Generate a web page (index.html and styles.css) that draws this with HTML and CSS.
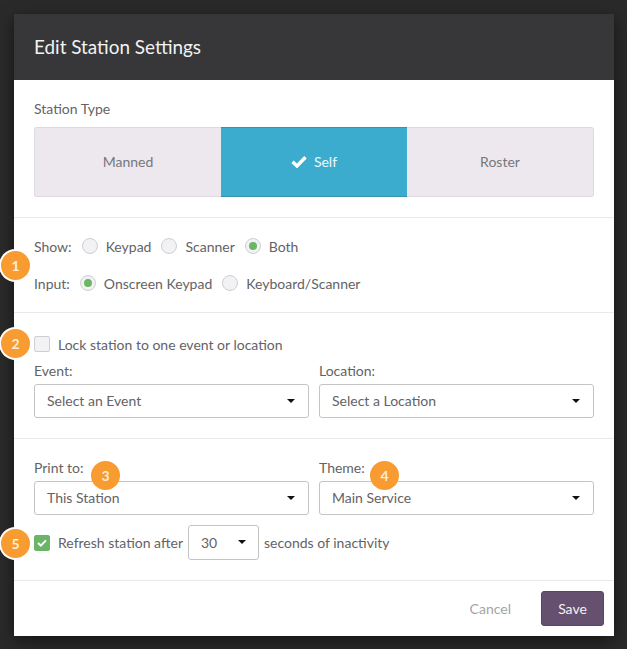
FILE: index.html
```html
<!DOCTYPE html>
<html lang="en">
<head>
<meta charset="utf-8">
<title>Edit Station Settings</title>
<link rel="stylesheet" href="styles.css">
</head>
<body>
<div class="modal">
  <header class="modal-header">Edit Station Settings</header>

  <section class="section type-section">
    <div class="label type-label">Station Type</div>
    <div class="segments">
      <div class="segment">Manned</div>
      <div class="segment active">
        <svg class="seg-check" width="16" height="13" viewBox="0 0 16 13"><path d="M1.5 6.8 L6 11 L14.5 2.2" fill="none" stroke="#fff" stroke-width="3.4"/></svg>
        Self
      </div>
      <div class="segment">Roster</div>
    </div>
  </section>

  <section class="section radio-section">
    <div class="radio-row show-row">
      <span class="row-label">Show:</span>
      <span class="radio"></span><span class="radio-text">Keypad</span>
      <span class="radio"></span><span class="radio-text">Scanner</span>
      <span class="radio on"></span><span class="radio-text">Both</span>
    </div>
    <div class="radio-row">
      <span class="row-label">Input:</span>
      <span class="radio on"></span><span class="radio-text">Onscreen Keypad</span>
      <span class="radio"></span><span class="radio-text">Keyboard/Scanner</span>
    </div>
  </section>

  <section class="section lock-section">
    <div class="check-row">
      <span class="checkbox"></span>
      <span>Lock station to one event or location</span>
    </div>
    <div class="field-grid">
      <div>
        <div class="label field-label">Event:</div>
        <div class="select"><span>Select an Event</span><i class="caret"></i></div>
      </div>
      <div>
        <div class="label field-label">Location:</div>
        <div class="select"><span>Select a Location</span><i class="caret"></i></div>
      </div>
    </div>
  </section>

  <section class="section print-section">
    <div class="field-grid">
      <div>
        <div class="label field-label">Print to:</div>
        <div class="select"><span>This Station</span><i class="caret"></i></div>
      </div>
      <div>
        <div class="label field-label">Theme:</div>
        <div class="select"><span>Main Service</span><i class="caret"></i></div>
      </div>
    </div>
    <div class="refresh-row">
      <span class="checkbox checked">
        <svg width="10" height="8" viewBox="0 0 10 8"><path d="M1 4 L3.8 6.6 L9 1.4" fill="none" stroke="#fff" stroke-width="2"/></svg>
      </span>
      <span class="refresh-text">Refresh station after</span>
      <div class="select small"><span>30</span><i class="caret"></i></div>
      <span class="after-text">seconds of inactivity</span>
    </div>
  </section>

  <footer class="modal-footer">
    <span class="cancel">Cancel</span>
    <span class="save">Save</span>
  </footer>

  <span class="badge ring b1">1</span>
  <span class="badge ring b2">2</span>
  <span class="badge b3">3</span>
  <span class="badge b4">4</span>
  <span class="badge ring b5">5</span>
</div>
</body>
</html>
```
FILE: styles.css
```css
* { box-sizing: border-box; }
html, body { margin: 0; height: 649px; overflow: hidden; }
body {
  background: #2a2a2a;
  padding: 14px 13px 13px 14px;
  font-family: Lato, "Liberation Sans", sans-serif;
  font-size: 14px;
  color: #636366;
}
.modal {
  position: relative;
  width: 600px;
  height: 622px;
  background: #fff;
  display: flex;
  flex-direction: column;
  box-shadow: 0 5px 15px rgba(0, 0, 0, .5);
}
.modal-header {
  height: 66px;
  background: #373739;
  color: #f2f2f2;
  font-size: 18.9px;
  line-height: 66px;
  padding-left: 20px;
}
.section { padding: 0 20px; border-bottom: 1px solid #eaeaea; }
.type-section { height: 138px; padding-top: 19px; }
.label { line-height: 20px; }
.type-label { height: 28px; }
.segments {
  display: grid;
  grid-template-columns: 187px 186px 187px;
  height: 70px;
}
.segment {
  display: flex;
  align-items: center;
  justify-content: center;
  gap: 7px;
  background: #ece8ee;
  border: 1px solid #dedbe0;
  color: #77777a;
  padding-bottom: 2px;
}
.segment:first-child { border-right: 0; border-radius: 3px 0 0 3px; }
.segment:last-child { border-left: 0; border-radius: 0 3px 3px 0; }
.segment.active {
  background: #3cacce;
  border: 0;
  border-top: 1px solid #3593af;
  border-bottom: 1px solid #3593af;
  color: #eef8fb;
}
.radio-section { height: 95px; padding-top: 18px; }
.radio-row { display: flex; align-items: center; height: 20px; }
.show-row { margin-bottom: 17px; }
.row-label { margin-right: 10px; }
.radio {
  width: 16px;
  height: 16px;
  border-radius: 50%;
  background: #f2f1f4;
  border: 1px solid #cfcfd2;
  margin-right: 8px;
  display: flex;
  align-items: center;
  justify-content: center;
}
.radio.on::after {
  content: "";
  width: 8px;
  height: 8px;
  border-radius: 50%;
  background: #6cb566;
}
.radio-text { margin-right: 10px; }
.lock-section { height: 126px; padding-top: 21px; }
.check-row { display: flex; align-items: center; gap: 8px; height: 20px; margin-bottom: 7px; }
.checkbox {
  width: 16px;
  height: 16px;
  flex: none;
  background: #f2f1f4;
  border: 1px solid #cfcfd2;
  border-radius: 2px;
  display: flex;
  align-items: center;
  justify-content: center;
}
.checkbox.checked { background: #6cb566; border-color: #6cb566; }
.field-grid { display: grid; grid-template-columns: 275px 275px; gap: 10px; }
.field-label { height: 23px; line-height: 20px; }
.select {
  height: 34px;
  border: 1px solid #c4c4c4;
  border-radius: 3px;
  background: #fff;
  padding: 0 13px 1px 12px;
  display: flex;
  align-items: center;
  justify-content: space-between;
}
.caret {
  width: 0;
  height: 0;
  border-left: 4px solid transparent;
  border-right: 4px solid transparent;
  border-top: 4px solid #111;
}
.print-section { height: 142px; padding-top: 19px; }
.refresh-row { display: flex; align-items: center; height: 35px; margin-top: 10px; }
.refresh-text { margin: 0 5px 0 8px; }
.select.small { width: 71px; height: 35px; padding: 0 12px 1px 12px; margin-right: 5px; }
.after-text { padding-bottom: 1px; }
.modal-footer {
  flex: 1;
  display: flex;
  align-items: center;
  justify-content: flex-end;
  padding: 0 10px 0 0;
}
.cancel { color: #a4a4a6; margin-right: 30px; }
.save {
  width: 63px;
  height: 35px;
  line-height: 33px;
  text-align: center;
  background: #66506f;
  border: 1px solid #59465f;
  border-radius: 3px;
  color: #f4f1f5;
}
.badge {
  position: absolute;
  width: 29px;
  height: 29px;
  border-radius: 50%;
  background: #f89b30;
  color: #fdeeda;
  font-weight: 700;
  font-size: 14px;
  line-height: 29px;
  text-align: center;
}
.badge.ring { box-shadow: 0 0 0 2px #fff; }
.b1 { left: -13px; top: 237px; }
.b2 { left: -13px; top: 315px; }
.b3 { left: 77px; top: 447px; }
.b4 { left: 356px; top: 447px; }
.b5 { left: -13px; top: 515px; }
```
